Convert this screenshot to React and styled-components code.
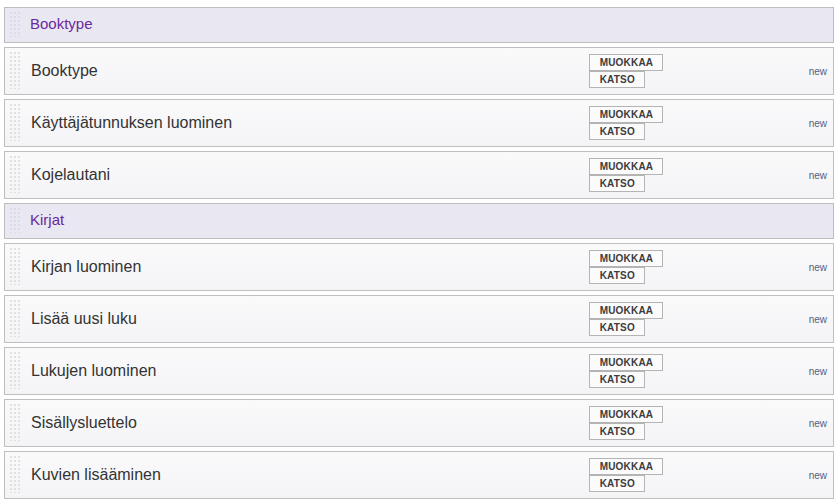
import React from "react";
import styled, { createGlobalStyle } from "styled-components";

const Global = createGlobalStyle`
  html, body { margin: 0; padding: 0; background: #ffffff; }
  body { font-family: "Liberation Sans", Arial, sans-serif; }
`;

const Page = styled.div`
  padding: 7px 4px 0 4px;
  display: flex;
  flex-direction: column;
  gap: 4px;
`;

const Handle = styled.div`
  width: 10px;
  align-self: stretch;
  margin: 4px 0 5px;
  background-image: linear-gradient(to right, ${(p) => p.$dot} 2px, transparent 2px);
  background-size: 4px 4px;
  -webkit-mask-image: linear-gradient(to bottom, #000 2px, transparent 2px);
  mask-image: linear-gradient(to bottom, #000 2px, transparent 2px);
  -webkit-mask-size: 4px 4px;
  mask-size: 4px 4px;
`;

const Category = styled.div`
  height: 34px;
  border: 1px solid #bdbdbd;
  background: #e9e7f2;
  display: flex;
  align-items: stretch;
  padding-left: 5px;
`;

const CategoryTitle = styled.div`
  margin-left: 10px;
  padding-bottom: 3px;
  align-self: center;
  font-size: 15px;
  color: #6a2a9c;
`;

const Item = styled.div`
  height: 46px;
  border: 1px solid #bfbfbf;
  background: linear-gradient(to bottom, #fafafb, #f4f4f7);
  display: grid;
  grid-template-columns: 10px 1fr 220px auto;
  align-items: center;
  padding: 0 6px 0 5px;
`;

const ItemTitle = styled.div`
  margin-left: 11px;
  font-size: 16px;
  color: #333333;
`;

const Buttons = styled.div`
  display: flex;
  flex-direction: column;
  align-items: flex-start;
`;

const Btn = styled.button`
  height: 17px;
  padding: 0 9px 0 10px;
  margin: 0;
  border: 1px solid #b4b4b4;
  background: #fbfbfb;
  font-family: "Liberation Sans", Arial, sans-serif;
  font-size: 10px;
  font-weight: bold;
  letter-spacing: 0.2px;
  color: #3c3c3c;
  line-height: 15px;
  cursor: pointer;
`;

const NewTag = styled.span`
  font-size: 10px;
  color: #4f5f86;
`;

const data = [
  { category: "Booktype", items: ["Booktype", "Käyttäjätunnuksen luominen", "Kojelautani"] },
  {
    category: "Kirjat",
    items: ["Kirjan luominen", "Lisää uusi luku", "Lukujen luominen", "Sisällysluettelo", "Kuvien lisääminen"],
  },
];

export default function App() {
  return (
    <>
      <Global />
      <Page>
        {data.map((group) => (
          <React.Fragment key={group.category}>
            <Category>
              <Handle $dot="#dddbe6" />
              <CategoryTitle>{group.category}</CategoryTitle>
            </Category>
            {group.items.map((it) => (
              <Item key={it}>
                <Handle $dot="#e0e0e0" />
                <ItemTitle>{it}</ItemTitle>
                <Buttons>
                  <Btn>MUOKKAA</Btn>
                  <Btn>KATSO</Btn>
                </Buttons>
                <NewTag>new</NewTag>
              </Item>
            ))}
          </React.Fragment>
        ))}
      </Page>
    </>
  );
}
